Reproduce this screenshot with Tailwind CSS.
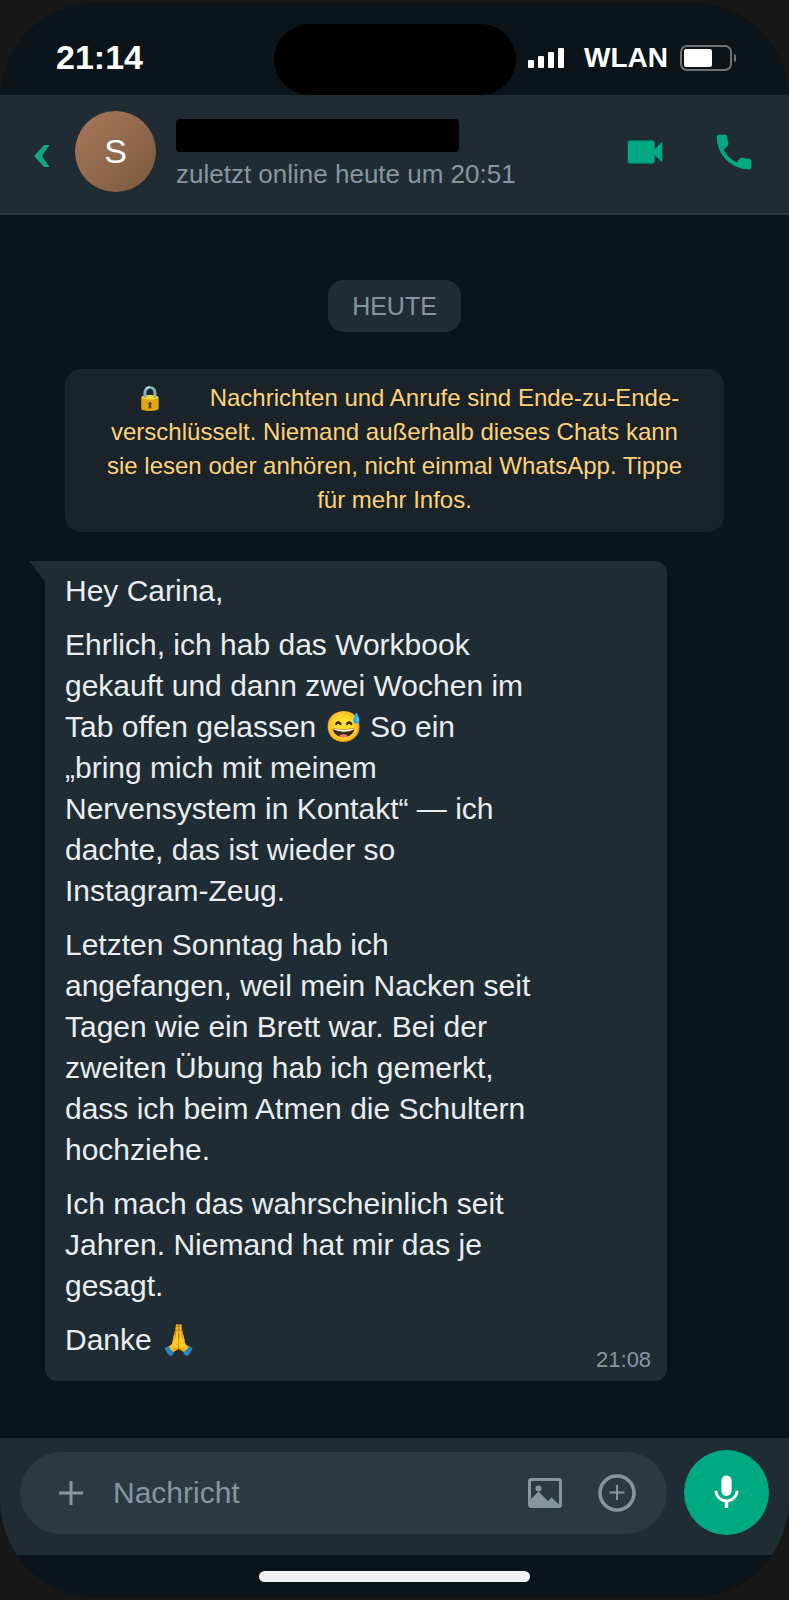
<!DOCTYPE html>
<html lang="de">

<head>
    <meta charset="UTF-8">
    <meta name="viewport" content="width=device-width, initial-scale=1.0">
    <title>Chat</title>
    <script src="https://cdn.jsdelivr.net/npm/@tailwindcss/browser@4"></script>
</head>

<body class="bg-[#171717] font-['Liberation_Sans',Arial,sans-serif]">
<div class="min-h-screen py-[2px] flex">
    <div class="flex-1 flex flex-col overflow-hidden rounded-[98px] bg-[#0b141a]">

        <!-- Statusleiste -->
        <div class="grid grid-cols-[1fr_242px_1fr] h-[93px] text-white font-bold">
            <div class="flex items-center pl-14 pt-[18px] text-[34px]">21:14</div>
            <div class="mt-[22px] rounded-full bg-black"></div>
            <div class="flex items-center justify-end gap-3 pr-[53px] pt-[18px]">
                <svg class="w-9 h-5 mr-2 shrink-0" viewBox="0 0 36 20" fill="currentColor">
                    <rect x="0" y="12" width="6" height="8" rx="1"/>
                    <rect x="10" y="8" width="6" height="12" rx="1"/>
                    <rect x="20" y="4" width="6" height="16" rx="1"/>
                    <rect x="30" y="0" width="6" height="20" rx="1"/>
                </svg>
                <span class="text-[28px]">WLAN</span>
                <svg class="w-14 h-[26px] shrink-0" viewBox="0 0 56 26">
                    <rect x="1" y="1" width="50" height="24" rx="6" fill="none" stroke="#6d7276" stroke-width="2"/>
                    <rect x="4" y="4" width="28" height="18" rx="2" fill="#fff"/>
                    <path d="M54 9a2 2 0 0 1 2 2v4a2 2 0 0 1-2 2z" fill="#6d7276"/>
                </svg>
            </div>
        </div>

        <!-- Kopfzeile -->
        <header class="flex items-center bg-[#202c33] border-b-2 border-[#2a363d] pt-4 pb-[21px] px-8">
            <button type="button" aria-label="Zurück" class="w-[43px] h-12 flex items-center pt-2">
                <svg class="w-5 h-6" viewBox="0 0 20 24" fill="#12a585">
                    <path d="M12 1h5.500L10 12l7.500 11H12L2.500 12.500v-1z"/>
                </svg>
            </button>
            <div class="size-[81px] rounded-full bg-linear-135 from-[#a9785a] to-[#7a5a40] text-white text-[34px] flex items-center justify-center">S</div>
            <div class="flex-1 pl-5 pt-2">
                <div class="w-[283px] h-[33px] rounded bg-black"></div>
                <p class="text-[26px] leading-9 pt-1 text-[#8696a0]">zuletzt online heute um 20:51</p>
            </div>
            <div class="flex gap-[43px] text-[#00a884]">
                <button type="button" aria-label="Videoanruf">
                    <svg class="size-[46px]" viewBox="0 0 24 24" fill="currentColor">
                        <path d="M17 10.500V7c0-.55-.45-1-1-1H4c-.55 0-1 .45-1 1v10c0 .55.45 1 1 1h12c.55 0 1-.45 1-1v-3.500l4 4v-11l-4 4z"/>
                    </svg>
                </button>
                <button type="button" aria-label="Anruf">
                    <svg class="size-[46px]" viewBox="0 0 24 24" fill="currentColor">
                        <path d="M6.620 10.790c1.440 2.830 3.760 5.140 6.590 6.590l2.200-2.200c.27-.27.67-.36 1.020-.24 1.120.37 2.330.57 3.570.57.55 0 1 .45 1 1V20c0 .55-.45 1-1 1-9.390 0-17-7.610-17-17 0-.55.45-1 1-1h3.500c.55 0 1 .45 1 1 0 1.250.2 2.450.57 3.570.11.35.03.74-.25 1.020l-2.200 2.200z"/>
                    </svg>
                </button>
            </div>
        </header>

        <!-- Chatverlauf -->
        <main class="flex-1 px-[45px] pt-[65px] pb-14">
            <div class="flex justify-center">
                <span class="rounded-2xl bg-[#202c33] px-6 py-2 text-[25px] leading-9 text-[#8696a0]">HEUTE</span>
            </div>

            <p class="mx-5 mt-[37px] rounded-2xl bg-[#1a2329] px-8 pt-3 pb-[15px] text-center text-[24px] leading-[34px] text-[#ffd279]">
                <span class="inline-block w-25 pr-5">🔒</span>Nachrichten und Anrufe sind Ende-zu-Ende-verschlüsselt. Niemand außerhalb dieses Chats kann sie lesen oder anhören, nicht einmal WhatsApp. Tippe für mehr Infos.
            </p>

            <div class="relative mt-[29px] w-[89%] rounded-xl rounded-tl-none bg-[#202c33] px-5 py-[9px]">
                <!-- Sprechblasenspitze -->
                <svg class="absolute top-0 -left-4 w-4 h-5" viewBox="0 0 16 20" fill="#202c33">
                    <path d="M0 0h16v20z"/>
                </svg>
                <div class="max-w-[470px] flex flex-col gap-[13px] text-[30px] leading-[41px] text-[#e9edef]">
                    <p>Hey Carina,</p>
                    <p>Ehrlich, ich hab das Workbook gekauft und dann zwei Wochen im Tab offen gelassen 😅 So ein „bring mich mit meinem Nervensystem in Kontakt“ — ich dachte, das ist wieder so Instagram-Zeug.</p>
                    <p>Letzten Sonntag hab ich angefangen, weil mein Nacken seit Tagen wie ein Brett war. Bei der zweiten Übung hab ich gemerkt, dass ich beim Atmen die Schultern hochziehe.</p>
                    <p>Ich mach das wahrscheinlich seit Jahren. Niemand hat mir das je gesagt.</p>
                    <p>Danke 🙏</p>
                </div>
                <div class="-mt-3 -mr-1 text-right text-[22px] leading-6 text-[#8696a0]">21:08</div>
            </div>
        </main>

        <!-- Eingabe -->
        <form class="flex items-center gap-[17px] bg-[#202c33] pt-3 pb-5 px-5">
            <div class="flex-1 min-w-0 h-[82px] flex items-center rounded-full bg-[#2a3942] pl-[39px] pr-[31px] text-[#8696a0]">
                <button type="button" aria-label="Anhang">
                    <svg class="size-6" viewBox="0 0 24 24" stroke="currentColor" stroke-width="3" fill="none">
                        <path d="M12 0v24M0 12h24"/>
                    </svg>
                </button>
                <input type="text" aria-label="Nachricht" placeholder="Nachricht" class="flex-1 min-w-0 pl-[30px] text-[30px] text-[#e9edef] placeholder:text-[#8696a0] outline-none">
                <button type="button" aria-label="Bild">
                    <svg class="w-[34px] h-[30px]" viewBox="0 0 34 30">
                        <rect x="1.500" y="1.500" width="31" height="27" rx="2" fill="none" stroke="currentColor" stroke-width="3"/>
                        <circle cx="10.500" cy="10.500" r="3" fill="currentColor"/>
                        <path d="M2 22l8.500-8.500 9.500 9.500 3.500-3.500 7.500 7V29H2z" fill="currentColor"/>
                    </svg>
                </button>
                <button type="button" aria-label="Sticker" class="ml-9">
                    <svg class="size-[38px]" viewBox="0 0 38 38" fill="none" stroke="currentColor">
                        <circle cx="19" cy="19" r="17" stroke-width="3.500"/>
                        <path d="M19 11v15M11.500 18.500h15" stroke-width="2"/>
                    </svg>
                </button>
            </div>
            <button type="button" aria-label="Sprachnachricht" class="size-[85px] shrink-0 rounded-full bg-[#00a884] text-white flex items-center justify-center">
                <svg class="size-[41px]" viewBox="0 0 24 24" fill="currentColor">
                    <path d="M12 14c1.660 0 3-1.340 3-3V5c0-1.660-1.340-3-3-3S9 3.340 9 5v6c0 1.660 1.340 3 3 3z"/>
                    <path d="M17.300 11c0 3-2.540 5.100-5.300 5.100S6.700 14 6.700 11H5c0 3.410 2.720 6.230 6 6.720V21h2v-3.280c3.280-.48 6-3.300 6-6.720h-1.700z"/>
                </svg>
            </button>
        </form>

        <!-- Home-Indikator -->
        <div class="flex justify-center pt-4 pb-4">
            <div class="w-[271px] h-[11px] rounded-full bg-[#f0f2f5]"></div>
        </div>
    </div>
</div>
</body>

</html>
